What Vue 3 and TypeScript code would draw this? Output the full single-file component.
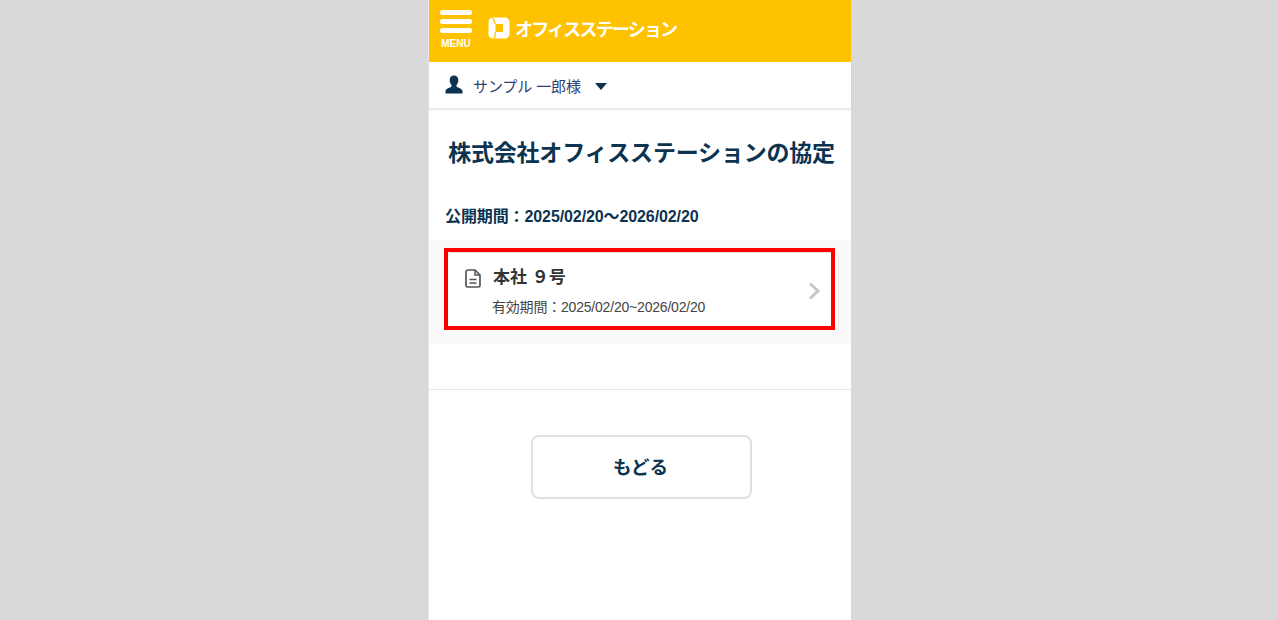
<script setup lang="ts">
const title: string = '株式会社オフィスステーションの協定'
</script>

<template>
  <div class="page">
    <main class="phone">
      <header class="top">
        <div class="menu">
          <span class="bar"></span><span class="bar"></span><span class="bar"></span>
          <span class="menu-label">MENU</span>
        </div>
        <svg class="logo" width="22" height="22" viewBox="0 0 22 22">
          <path fill="#fff" d="M5 0.500H17a4.500 4.500 0 0 1 4.500 4.500V17a4.500 4.500 0 0 1-4.500 4.500H5A4.500 4.500 0 0 1 0.500 17V5A4.500 4.500 0 0 1 5 0.500Z"/>
          <path fill="#ffc200" d="M7.500 7H15V15H7.500Z"/>
          <path fill="none" stroke="#ffc200" stroke-width="1.300" d="M4.500 0.500L7.500 7M7.500 15L6.500 21.500"/>
        </svg>
        <span class="brand">オフィスステーション</span>
      </header>
      <div class="user">
        <svg class="person" width="18" height="19" viewBox="0 0 18 19">
          <path fill="#0c3350" d="M9 0.500c2.700 0 4.300 2 4.300 4.700 0 2-0.800 3.700-1.800 4.700v1.600c0 0.800 5.500 1.800 6 4.500v2.500H0.500v-2.500c0.500-2.700 6-3.700 6-4.500V9.900C5.500 8.900 4.700 7.200 4.700 5.200 4.700 2.500 6.300 0.500 9 0.500Z"/>
        </svg>
        <span class="user-name">サンプル 一郎様</span>
        <span class="caret"></span>
      </div>
      <h1 class="title">{{ title }}</h1>
      <p class="period">公開期間：2025/02/20～2026/02/20</p>
      <section class="list">
        <a class="card">
          <svg class="doc" width="16" height="19" viewBox="0 0 16 19">
            <path fill="none" stroke="#555" stroke-width="1.700" d="M3 1H10L15 6V16.500A1.500 1.500 0 0 1 13.500 18H2.500A1.500 1.500 0 0 1 1 16.500V3A2 2 0 0 1 3 1Z"/>
            <path fill="none" stroke="#555" stroke-width="1.500" d="M10 1V6H15M4.500 10.500H11.500M4.500 14H11.500"/>
          </svg>
          <div class="card-text">
            <div class="card-title">本社 ９号</div>
            <div class="card-sub">有効期間：2025/02/20~2026/02/20</div>
          </div>
          <svg class="chev" width="13" height="18" viewBox="0 0 13 18">
            <path fill="none" stroke="#c4c8cc" stroke-width="3" d="M2 1.500L10 9L2 16.500"/>
          </svg>
          <span class="highlight"></span>
        </a>
      </section>
      <div class="actions">
        <button class="back" type="button">もどる</button>
      </div>
    </main>
  </div>
</template>

<style>
html, body { margin: 0; background: #d9d9d9; }
</style>

<style scoped>
.page {
  height: 620px;
  overflow: hidden;
  display: flex;
  justify-content: center;
  background: #d9d9d9;
  font-family: "Liberation Sans", "Noto Sans CJK JP", sans-serif;
}
.phone {
  width: 423px;
  height: 620px;
  background: #fff;
  border-left: 1px solid #e6e6e6;
  box-sizing: border-box;
  margin-left: 1px;
}
.top {
  height: 62px;
  background: #ffc200;
  display: flex;
  align-items: center;
  padding-left: 11px;
}
.menu {
  width: 32px;
  display: flex;
  flex-direction: column;
  align-items: center;
  padding-top: 10px;
  align-self: flex-start;
}
.bar {
  width: 32px;
  height: 5px;
  border-radius: 3px;
  background: #fff;
  margin-bottom: 4px;
}
.menu-label {
  font-size: 10px;
  font-weight: 700;
  line-height: 11px;
  color: #fff;
  margin-top: 1px;
}
.logo { margin-left: 16px; margin-top: -6px; }
.brand {
  margin-left: 5px;
  margin-top: -6px;
  font-size: 18px;
  font-weight: 700;
  letter-spacing: -1.800px;
  color: #fff;
  white-space: nowrap;
}
.user {
  height: 46px;
  display: flex;
  align-items: center;
  padding-left: 16px;
  box-shadow: 0 2px 2px rgba(0, 0, 0, 0.1);
}
.person { margin-top: -2px; }
.user-name {
  margin-left: 10px;
  font-size: 15px;
  color: #2f3f72;
  letter-spacing: -0.1px;
}
.caret {
  margin-left: 14px;
  border-left: 6.500px solid transparent;
  border-right: 6.500px solid transparent;
  border-top: 7px solid #0c3350;
  margin-top: 2px;
}
.title {
  margin: 28px 0 0 3px;
  text-align: center;
  font-size: 23px;
  line-height: 34px;
  font-weight: 700;
  color: #0c3350;
  letter-spacing: -0.2px;
  white-space: nowrap;
}
.period {
  margin: 35px 0 0 16px;
  font-size: 16px;
  line-height: 24px;
  font-weight: 700;
  color: #0c3350;
  letter-spacing: -0.1px;
}
.list {
  margin-top: 11px;
  height: 104px;
  background: #fafafa;
  padding: 12px 12px 0 18px;
  box-sizing: border-box;
}
.card {
  position: relative;
  height: 78px;
  box-sizing: border-box;
  display: flex;
  align-items: center;
  background: #fff;
  border: 1px solid #e2e2e2;
  border-radius: 6px;
  padding: 0 17px 0 17px;
}
.doc { align-self: flex-start; margin-top: 16px; }
.card-text { flex: 1; margin-left: 12px; }
.card-title {
  font-size: 17px;
  line-height: 24px;
  font-weight: 700;
  color: #333;
}
.card-sub {
  margin-top: 7px;
  margin-left: -1px;
  font-size: 14px;
  line-height: 20px;
  color: #444;
  letter-spacing: -0.2px;
}
.highlight {
  position: absolute;
  left: -4px;
  top: -5px;
  width: 391px;
  height: 82px;
  box-sizing: border-box;
  border: 4px solid #f00;
}
.actions {
  margin-top: 45px;
  border-top: 1px solid #e6e6e6;
  display: flex;
  justify-content: center;
  padding-top: 45px;
  padding-left: 3px;
}
.back {
  width: 221px;
  height: 64px;
  background: #fff;
  border: 2px solid #e0e0e0;
  border-radius: 8px;
  font-family: inherit;
  font-size: 18.500px;
  font-weight: 700;
  color: #0c3350;
  padding: 0 2px 2px 0;
}
</style>
